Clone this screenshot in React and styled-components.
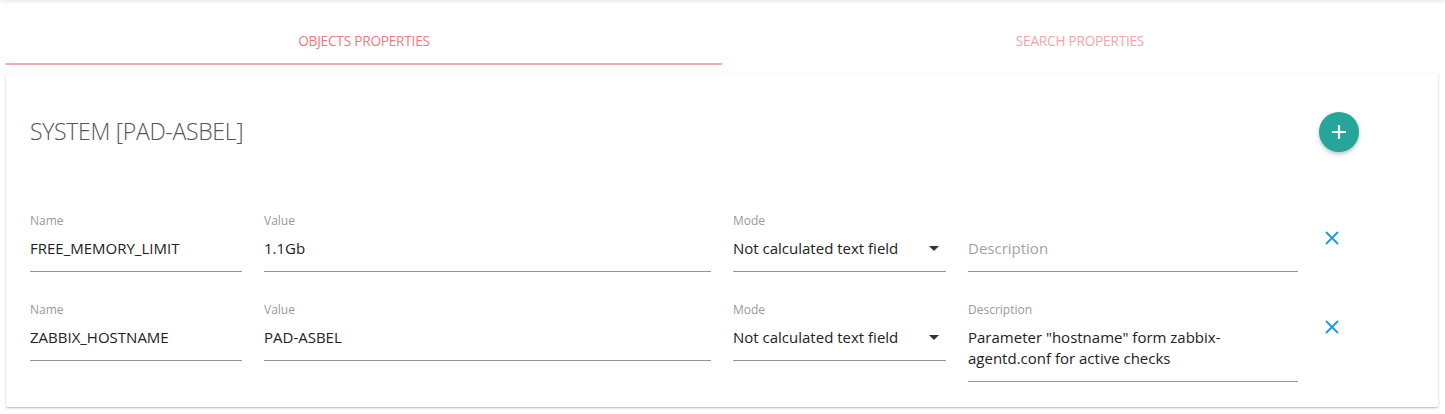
import React from "react";
import styled, { createGlobalStyle } from "styled-components";

const Global = createGlobalStyle`
  html, body { margin: 0; padding: 0; background: #fff; }
  body { font-family: "Open Sans", "Noto Sans", sans-serif; color: #222; }
  * { box-sizing: border-box; }
`;

const Page = styled.div`
  width: 1445px;
  height: 414px;
  padding: 0 7px 0 6px;
  position: relative;
  overflow: hidden;
  &::before {
    content: "";
    position: absolute;
    left: 0; right: 0; top: -4px;
    height: 4px;
    box-shadow: 0 1px 4px rgba(0,0,0,0.12);
  }
`;

const TabBar = styled.div`
  display: flex;
  height: 65px;
`;

const Tab = styled.div`
  flex: 1;
  display: flex;
  align-items: center;
  justify-content: center;
  padding-top: 17px;
  font-size: 13.6px;
  letter-spacing: -0.2px;
  text-transform: uppercase;
  color: ${p => (p.$active ? "#f0787e" : "#f5a3a8")};
  border-bottom: 2px solid ${p => (p.$active ? "#f5a9ac" : "transparent")};
`;

const Card = styled.div`
  margin-top: 8px;
  background: #fff;
  border-radius: 2px;
  box-shadow: 0 1px 3px rgba(0,0,0,0.2), 0 1px 1px rgba(0,0,0,0.1);
  padding: 0 24px;
  height: 334px;
`;

const Header = styled.div`
  display: flex;
  align-items: center;
  justify-content: space-between;
  height: 116px;
  padding-right: 55px;
`;

const Title = styled.h2`
  margin: 0;
  font-size: 23px;
  font-weight: 300;
  color: #555;
  letter-spacing: -0.3px;
`;

const Fab = styled.button`
  width: 40px;
  height: 40px;
  border-radius: 50%;
  border: none;
  background: #26a69a;
  color: #fff;
  display: flex;
  align-items: center;
  justify-content: center;
  padding: 0;
  box-shadow: 0 2px 4px rgba(0,0,0,0.25);
  margin-top: 2px;
`;

const Rows = styled.div`
  display: flex;
  flex-direction: column;
  gap: 31px;
  padding-top: 25px;
`;

const Row = styled.div`
  display: grid;
  grid-template-columns: 212px 447px 213px 330px 1fr;
  column-gap: 22px;
  align-items: start;
`;

const Field = styled.div`
  display: flex;
  flex-direction: column;
  border-bottom: 1px solid #949494;
  padding-bottom: 12px;
`;

const Label = styled.div`
  font-size: 12px;
  color: #9a9a9a;
  height: 14px;
  line-height: 14px;
  margin-bottom: 10px;
  ${p => p.$hidden && "visibility: hidden;"}
`;

const Value = styled.div`
  font-size: 15px;
  line-height: 21px;
  color: ${p => (p.$placeholder ? "#a3a3a3" : "#222")};
  display: flex;
  align-items: center;
  justify-content: space-between;
`;

const Caret = styled.span`
  width: 0;
  height: 0;
  flex: none;
  border-left: 5px solid transparent;
  border-right: 5px solid transparent;
  border-top: 5px solid #333;
  margin-right: 7px;
`;

const Remove = styled.button`
  border: none;
  background: none;
  padding: 0;
  width: 24px;
  height: 24px;
  margin-top: 12px;
  color: #1e9be6;
  display: flex;
  align-items: center;
  justify-content: center;
`;

const PlusIcon = () => (
  <svg width="18" height="18" viewBox="0 0 18 18">
    <path d="M9 2v14M2 9h14" stroke="#fff" strokeWidth="2.2" />
  </svg>
);

const CloseIcon = () => (
  <svg width="16" height="16" viewBox="0 0 16 16">
    <path d="M2 2l12 12M14 2L2 14" stroke="#1e9be6" strokeWidth="1.9" />
  </svg>
);

const rows = [
  { name: "FREE_MEMORY_LIMIT", value: "1.1Gb", mode: "Not calculated text field", desc: "" },
  { name: "ZABBIX_HOSTNAME", value: "PAD-ASBEL", mode: "Not calculated text field", desc: 'Parameter "hostname" form zabbix-agentd.conf for active checks' },
];

export default function App() {
  return (
    <>
      <Global />
      <Page>
        <TabBar>
          <Tab $active>Objects properties</Tab>
          <Tab>Search properties</Tab>
        </TabBar>
        <Card>
          <Header>
            <Title>SYSTEM [PAD-ASBEL]</Title>
            <Fab><PlusIcon /></Fab>
          </Header>
          <Rows>
            {rows.map((r, i) => (
              <Row key={i}>
                <Field>
                  <Label>Name</Label>
                  <Value>{r.name}</Value>
                </Field>
                <Field>
                  <Label>Value</Label>
                  <Value>{r.value}</Value>
                </Field>
                <Field>
                  <Label>Mode</Label>
                  <Value>{r.mode}<Caret /></Value>
                </Field>
                <Field>
                  <Label $hidden={!r.desc}>Description</Label>
                  <Value $placeholder={!r.desc}>{r.desc || "Description"}</Value>
                </Field>
                <Remove><CloseIcon /></Remove>
              </Row>
            ))}
          </Rows>
        </Card>
      </Page>
    </>
  );
}
